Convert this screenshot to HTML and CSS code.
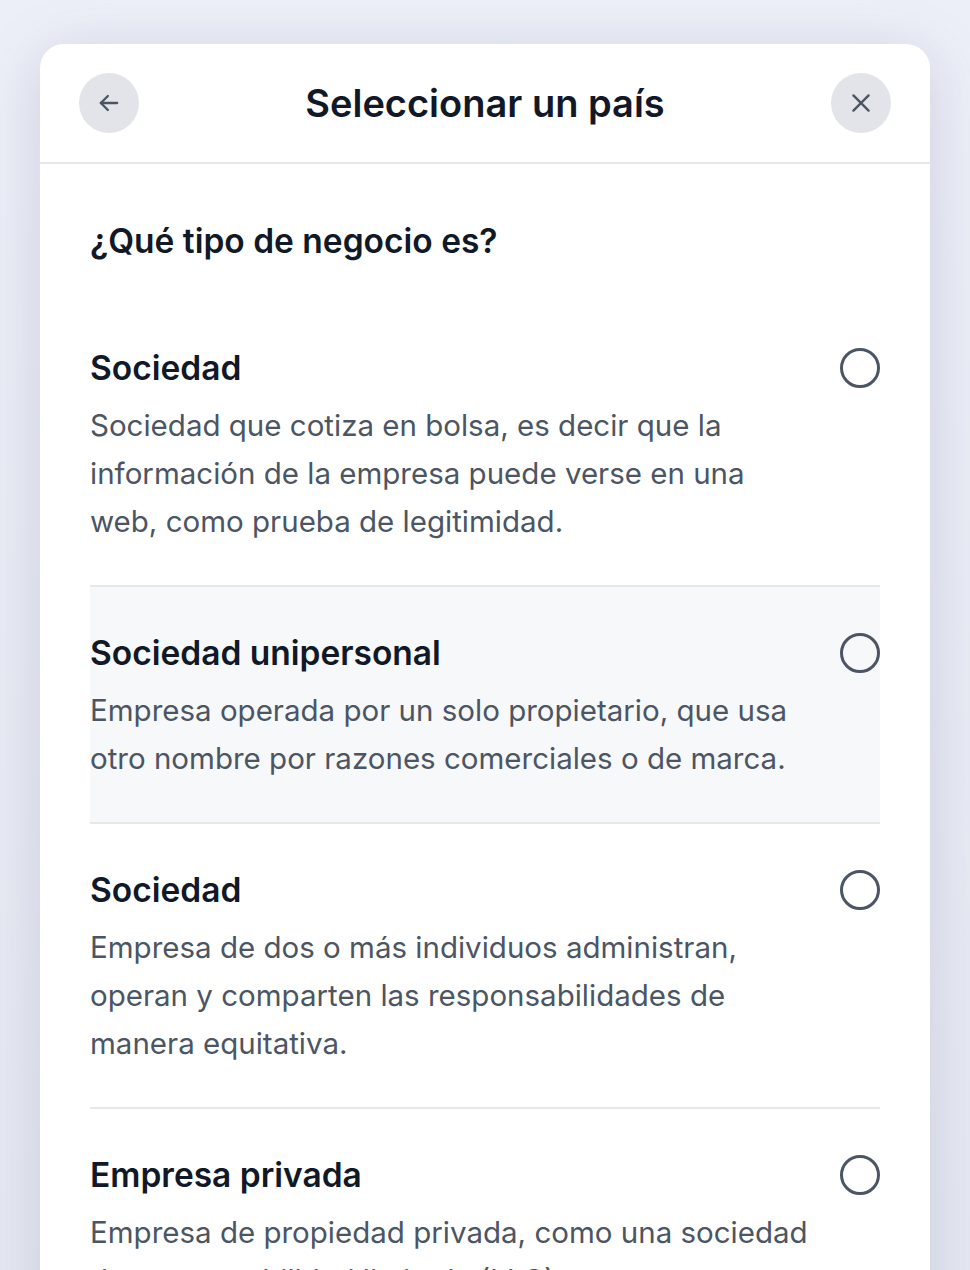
FILE: index.html
```html
<!DOCTYPE html>
<html lang="es">
<head>
<meta charset="utf-8">
<title>Seleccionar un país</title>
<link rel="stylesheet" href="styles.css">
</head>
<body>
<div class="card">
  <header class="head">
    <button class="circle-btn" aria-label="Atrás">
      <svg width="28" height="28" viewBox="0 0 24 24" fill="none" stroke="currentColor" stroke-width="2" stroke-linecap="round" stroke-linejoin="round"><path d="M19 12H5"/><path d="M11 6l-6 6 6 6"/></svg>
    </button>
    <h1 class="title">Seleccionar un país</h1>
    <button class="circle-btn" aria-label="Cerrar">
      <svg width="28" height="28" viewBox="0 0 24 24" fill="none" stroke="currentColor" stroke-width="2" stroke-linecap="round"><path d="M5.5 5.5l13 13"/><path d="M18.5 5.5l-13 13"/></svg>
    </button>
  </header>
  <main class="body">
    <h2 class="question">¿Qué tipo de negocio es?</h2>
    <ul class="options">
      <li class="option">
        <span class="opt-title">Sociedad</span>
        <span class="radio"></span>
        <p class="opt-desc">Sociedad que cotiza en bolsa, es decir que la información de la empresa puede verse en una web, como prueba de legitimidad.</p>
      </li>
      <li class="option hover">
        <span class="opt-title">Sociedad unipersonal</span>
        <span class="radio"></span>
        <p class="opt-desc">Empresa operada por un solo propietario, que usa otro nombre por razones comerciales o de marca.</p>
      </li>
      <li class="option">
        <span class="opt-title">Sociedad</span>
        <span class="radio"></span>
        <p class="opt-desc">Empresa de dos o más individuos administran, operan y comparten las responsabilidades de manera equitativa.</p>
      </li>
      <li class="option">
        <span class="opt-title">Empresa privada</span>
        <span class="radio"></span>
        <p class="opt-desc">Empresa de propiedad privada, como una sociedad de responsabilidad limitada (LLC).</p>
      </li>
    </ul>
  </main>
</div>
</body>
</html>
```
FILE: styles.css
```css
* { box-sizing: border-box; }
html, body { margin: 0; padding: 0; }
body {
  height: 1270px;
  overflow: hidden;
  background: linear-gradient(180deg, #edeff8 0%, #e6e9f2 100%);
  font-family: Inter, "Noto Sans", sans-serif;
  padding: 44px 40px 0;
}
.card {
  background: #fff;
  border-radius: 24px 24px 0 0;
  box-shadow: 0 10px 60px rgba(90, 100, 140, 0.22);
  min-height: 1300px;
}
.head {
  display: flex;
  align-items: center;
  justify-content: space-between;
  padding: 29px 39px;
  border-bottom: 2px solid #e5e7eb;
}
.circle-btn {
  width: 60px;
  height: 60px;
  border-radius: 50%;
  border: none;
  background: #e3e4e9;
  color: #4b5563;
  display: flex;
  align-items: center;
  justify-content: center;
  padding: 0;
}
.title {
  margin: 0;
  font-size: 38px;
  line-height: 44px;
  font-weight: 600;
  color: #111827;
}
.body {
  padding: 57px 50px 0;
}
.question {
  margin: 0 0 41px;
  font-size: 33.5px;
  line-height: 40px;
  font-weight: 600;
  color: #111827;
}
.options {
  list-style: none;
  margin: 0;
  padding: 0;
}
.option {
  display: grid;
  grid-template-columns: 1fr 40px;
  column-gap: 27px;
  row-gap: 13px;
  align-items: center;
  padding: 46px 0 40px;
  border-bottom: 2px solid #e5e7eb;
}
.option.hover { background: #f7f8fa; }
.opt-title {
  font-size: 33.5px;
  line-height: 40px;
  font-weight: 600;
  color: #111827;
}
.radio {
  width: 40px;
  height: 40px;
  border-radius: 50%;
  border: 3px solid #4b5563;
}
.opt-desc {
  margin: 0;
  font-size: 29.5px;
  line-height: 48px;
  color: #4b5563;
}
```
